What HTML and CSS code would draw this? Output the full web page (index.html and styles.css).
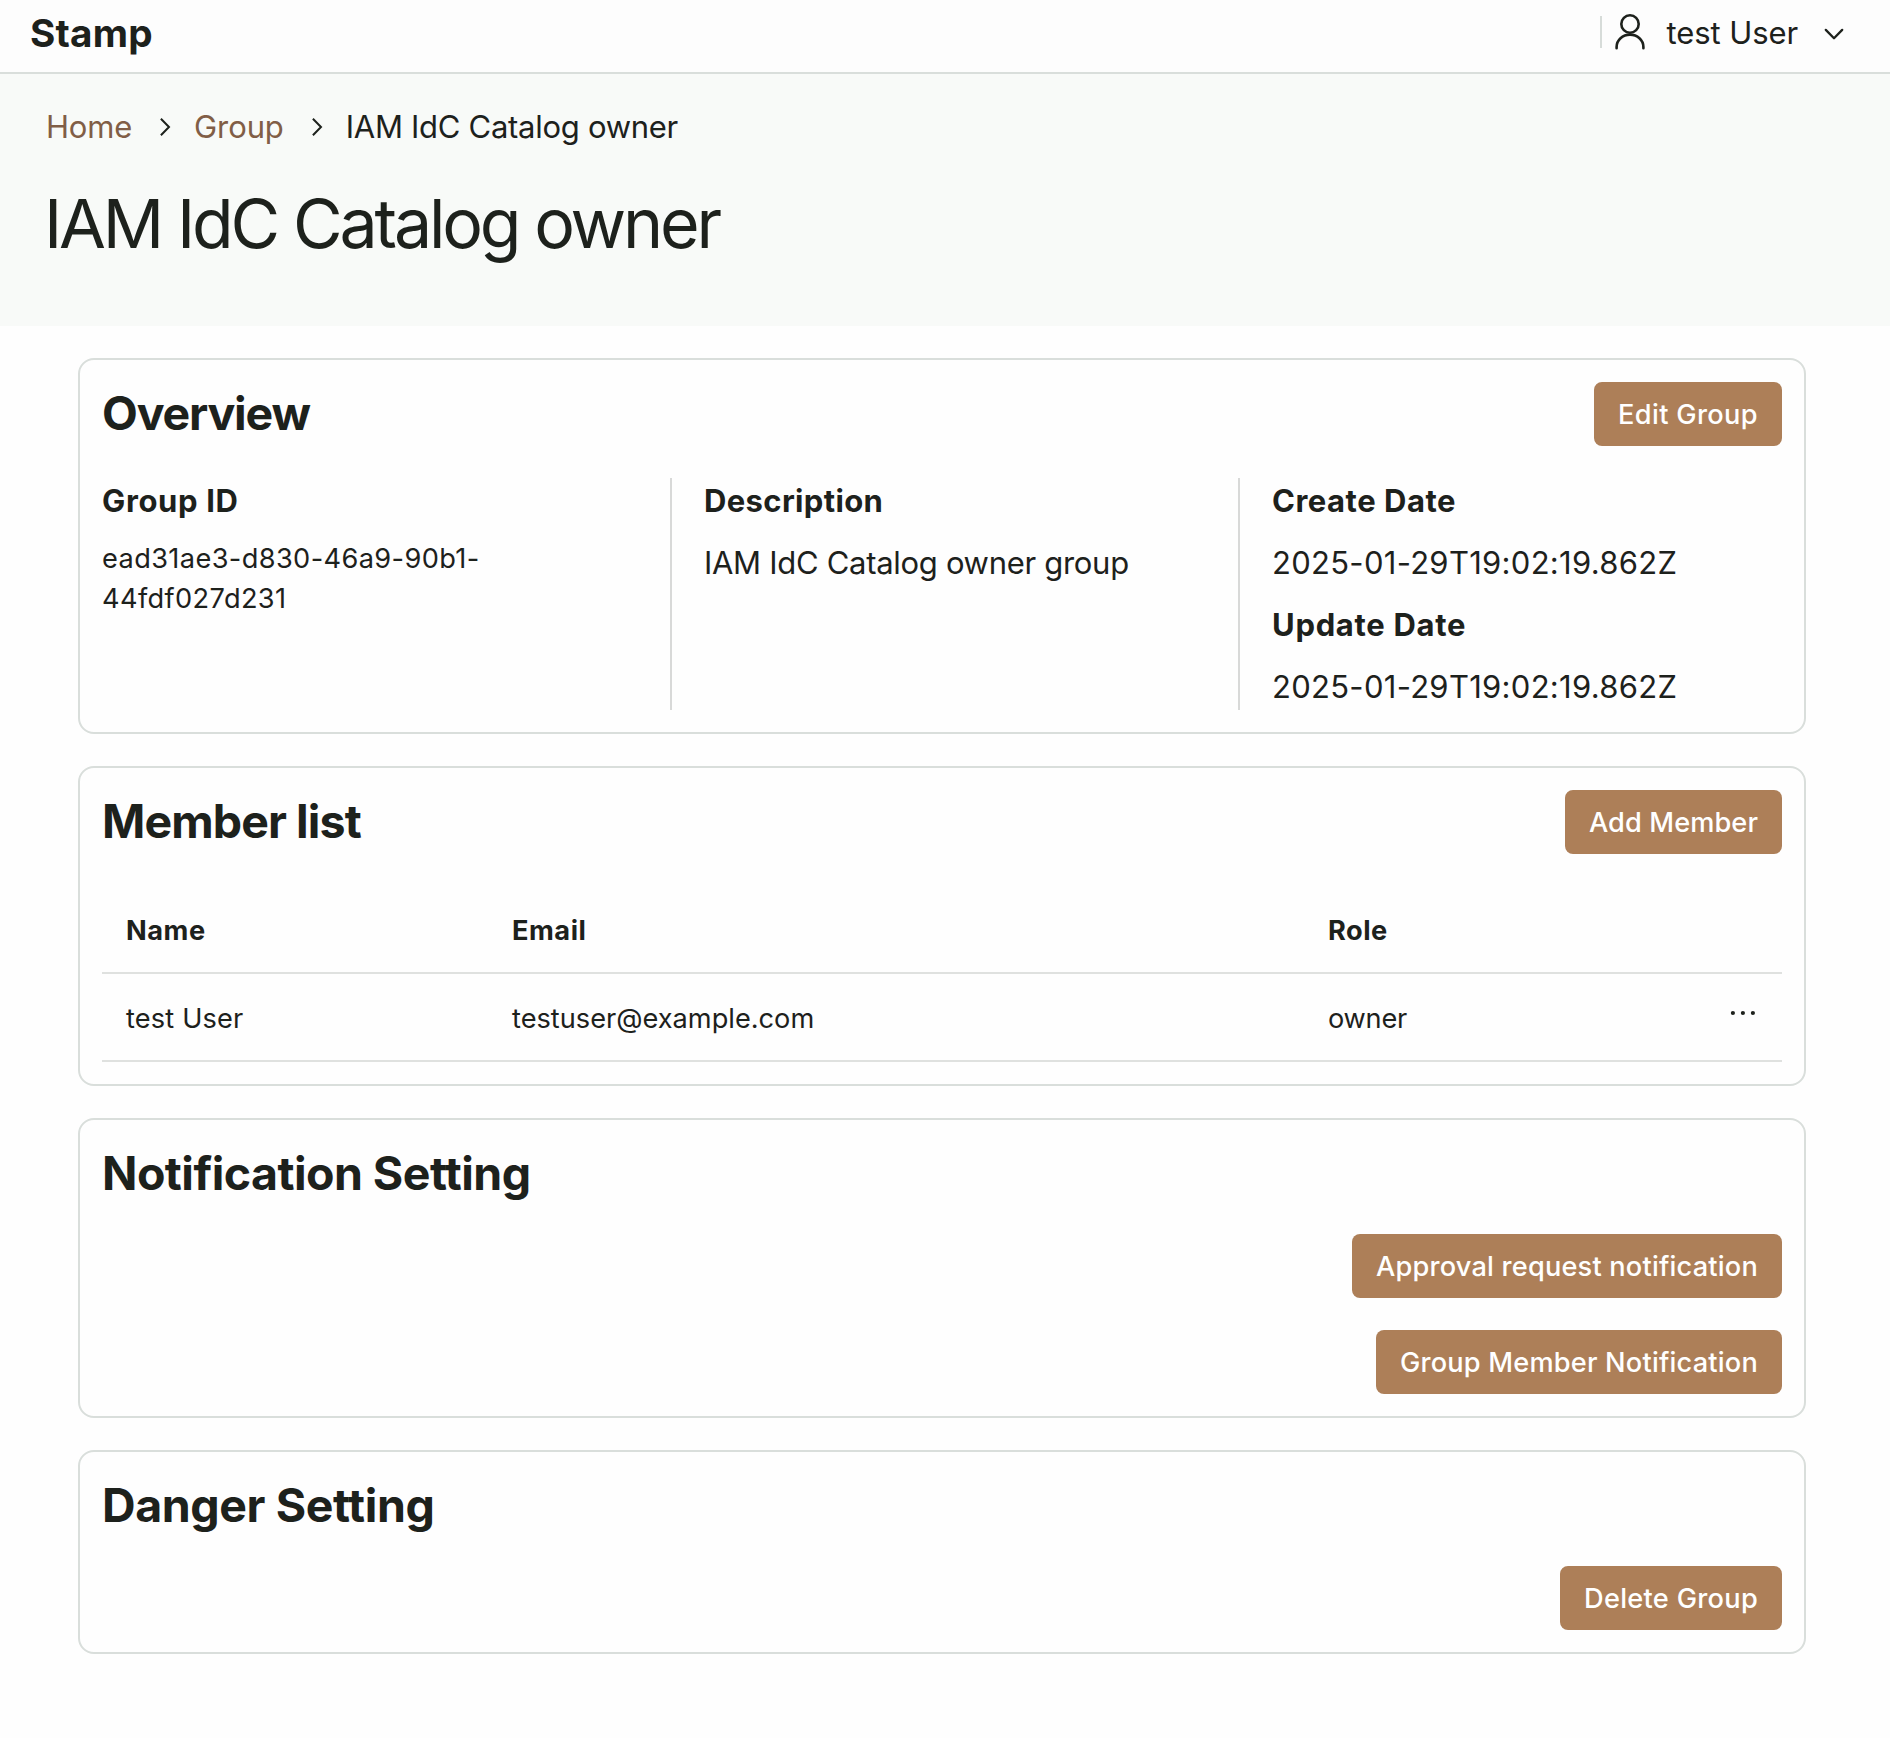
FILE: index.html
```html
<!DOCTYPE html>
<html lang="en">
<head>
<meta charset="utf-8">
<title>IAM IdC Catalog owner - Stamp</title>
<link rel="stylesheet" href="styles.css">
</head>
<body>
<header class="topbar">
  <div class="brand">Stamp</div>
  <div class="user-menu">
    <svg class="user-icon" viewBox="0 0 36 40" fill="none" stroke="currentColor" stroke-width="2.6" stroke-linecap="round">
      <circle cx="18" cy="12" r="8.7"/>
      <path d="M4.6 36.2V35a13.4 12.4 0 0 1 26.8 0v1.2"/>
    </svg>
    <span class="user-name">test User</span>
    <svg class="caret" viewBox="0 0 20 12" fill="none" stroke="currentColor" stroke-width="2.3" stroke-linecap="round" stroke-linejoin="round">
      <path d="M1.8 1.9L10 10.2l8.2-8.3"/>
    </svg>
  </div>
</header>

<section class="hero">
  <nav class="breadcrumb">
    <a class="crumb-link crumb-home">Home</a>
    <svg class="crumb-sep" viewBox="0 0 12 20" fill="none" stroke="currentColor" stroke-width="2"><path d="M1.9 1.7L10 10l-8.1 8.3"/></svg>
    <a class="crumb-link">Group</a>
    <svg class="crumb-sep" viewBox="0 0 12 20" fill="none" stroke="currentColor" stroke-width="2"><path d="M1.9 1.7L10 10l-8.1 8.3"/></svg>
    <span class="crumb-current">IAM IdC Catalog owner</span>
  </nav>
  <h1 class="page-title">IAM IdC Catalog owner</h1>
</section>

<main class="content">
  <section class="card">
    <div class="card-head">
      <h2 class="card-title title-overview">Overview</h2>
      <button class="button button-edit">Edit Group</button>
    </div>
    <div class="details">
      <div class="detail-col">
        <h3 class="label label-id">Group ID</h3>
        <p class="group-id">ead31ae3-d830-46a9-90b1-44fdf027d231</p>
      </div>
      <div class="detail-col">
        <h3 class="label">Description</h3>
        <p class="value">IAM IdC Catalog owner group</p>
      </div>
      <div class="detail-col">
        <h3 class="label label-date">Create Date</h3>
        <p class="value value-date">2025-01-29T19:02:19.862Z</p>
        <h3 class="label label-update">Update Date</h3>
        <p class="value value-date">2025-01-29T19:02:19.862Z</p>
      </div>
    </div>
  </section>

  <section class="card">
    <div class="card-head">
      <h2 class="card-title title-members">Member list</h2>
      <button class="button button-add">Add Member</button>
    </div>
    <table class="members">
      <colgroup><col class="col-name"><col class="col-email"><col class="col-role"><col class="col-menu"></colgroup>
      <thead>
        <tr><th>Name</th><th>Email</th><th>Role</th><th></th></tr>
      </thead>
      <tbody>
        <tr>
          <td class="cell-name">test User</td>
          <td>testuser@example.com</td>
          <td class="cell-role">owner</td>
          <td><svg class="dots" viewBox="0 0 30 30" fill="currentColor"><circle cx="4.9" cy="14" r="2.1"/><circle cx="14.9" cy="14" r="2.1"/><circle cx="24.9" cy="14" r="2.1"/></svg></td>
        </tr>
      </tbody>
    </table>
  </section>

  <section class="card">
    <h2 class="card-title">Notification Setting</h2>
    <div class="actions">
      <button class="button">Approval request notification</button>
      <button class="button button-group">Group Member Notification</button>
    </div>
  </section>

  <section class="card">
    <h2 class="card-title title-danger">Danger Setting</h2>
    <div class="actions">
      <button class="button button-delete">Delete Group</button>
    </div>
  </section>
</main>
</body>
</html>
```
FILE: styles.css
```css
* { box-sizing: border-box; margin: 0; padding: 0; }

body {
  background: #fefefe;
  color: #1d211c;
  font-family: Inter, "Liberation Sans", sans-serif;
  font-size: 31px;
}

svg { display: block; flex: none; }

/* Top bar */
.topbar {
  display: flex;
  justify-content: space-between;
  height: 74px;
  padding: 0 46px 8px 30px;
  background: #fdfdfd;
  border-bottom: 2px solid #d9dedb;
}
.brand { font-size: 38.7px; font-weight: 700; line-height: 66px; letter-spacing: 0.2px; }
.user-menu {
  display: flex;
  align-items: center;
  align-self: flex-start;
  height: 32px;
  margin-top: 16px;
  padding-left: 10px;
  border-left: 2px solid #d7dcd9;
}
.user-icon { width: 36px; height: 40px; }
.user-name { margin-left: 18px; line-height: 34px; padding-top: 1px; letter-spacing: -0.08px; }
.caret { width: 20px; height: 12px; margin: 3px 0 0 26px; }

/* Page heading */
.hero { height: 252px; padding: 29px 46px 0; background: #f8faf8; }
.breadcrumb { display: flex; align-items: center; height: 48px; line-height: 48px; }
.crumb-link { color: #815e46; letter-spacing: -0.1px; }
.crumb-home { letter-spacing: -0.2px; }
.crumb-sep { width: 12px; height: 20px; margin: 0 23px 1px 27px; }
.crumb-current { letter-spacing: -0.28px; }
.page-title {
  margin: 32px 0 0 -2px;
  font-size: 68px;
  font-weight: 400;
  line-height: 80px;
  letter-spacing: -3.18px;
}

/* Cards */
.content { display: flex; flex-direction: column; gap: 32px; padding: 32px 84px 84px 78px; }
.card { padding: 22px; border: 2px solid #d9dedb; border-radius: 16px; }
.card-head { display: flex; justify-content: space-between; align-items: flex-start; }
.card-title {
  height: 60px;
  font-size: 46.5px;
  font-weight: 700;
  line-height: 62px;
  letter-spacing: -0.55px;
}
.title-overview { letter-spacing: -1.2px; }
.title-members { letter-spacing: -0.9px; }
.title-danger { letter-spacing: -0.4px; }

.button {
  height: 64px;
  padding: 2px 24px 0;
  border: 0;
  border-radius: 8px;
  background: #ad7f58;
  color: #fff;
  font-family: inherit;
  font-size: 27.2px;
  font-weight: 500;
  line-height: 62px;
  letter-spacing: 0.19px;
  white-space: nowrap;
}
.button-edit { letter-spacing: 0.35px; }
.button-add { letter-spacing: 0.09px; }
.button-group { width: 406px; }
.button-delete { letter-spacing: 0.29px; }
.actions { display: flex; flex-direction: column; align-items: flex-end; gap: 32px; margin-top: 32px; }

/* Overview details */
.details { display: grid; grid-template-columns: 568px 568px 1fr; margin-top: 32px; }
.detail-col { display: flex; flex-direction: column; gap: 16px; padding-right: 32px; }
.detail-col + .detail-col { padding-left: 32px; border-left: 2px solid #d8d9d8; }
.label { font-size: 31px; font-weight: 700; line-height: 46px; letter-spacing: 0.36px; }
.label-id { letter-spacing: 0.65px; }
.label-date { letter-spacing: 0.51px; }
.label-update { letter-spacing: 0.7px; }
.value { line-height: 46px; letter-spacing: -0.3px; }
.value-date { letter-spacing: 0.29px; }
.group-id { margin-top: -1px; font-size: 27.2px; line-height: 40px; letter-spacing: 0.38px; }

/* Member table */
.members {
  width: 100%;
  margin-top: 32px;
  border-collapse: separate;
  border-spacing: 0;
  table-layout: fixed;
  font-size: 27.2px;
  line-height: 40px;
  text-align: left;
}
.members th, .members td {
  height: 88px;
  padding: 25px 24px 21px;
  border-bottom: 2px solid #dfe1df;
}
.members th { font-weight: 700; letter-spacing: 0.52px; }
.col-name { width: 386px; }
.col-email { width: 816px; }
.col-menu { width: 78px; }
.members .cell-name { letter-spacing: 0.16px; }
.members .cell-role { letter-spacing: -0.24px; }
.dots { width: 30px; height: 30px; margin-bottom: 10px; }
```
